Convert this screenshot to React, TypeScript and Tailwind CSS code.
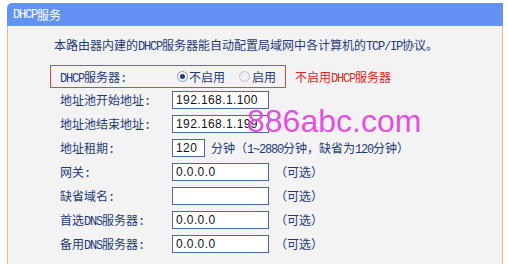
import React from "react";

const CJK = '"Noto Sans CJK SC", "Noto Sans", sans-serif';

function T({ s }: { s: string }) {
  const parts = s.split(/([\x20-\x7e]+)/).filter((p) => p.length > 0);
  return (
    <>
      {parts.map((p, i) =>
        /^[\x20-\x7e]+$/.test(p) ? (
          <span key={i} className="text-[12px] tracking-[-1.2px] font-['Liberation_Mono',monospace]">
            {p}
          </span>
        ) : (
          <span key={i}>{p}</span>
        )
      )}
    </>
  );
}

function Input({ value, w = "w-[97px]" }: { value: string; w?: string }) {
  return (
    <div
      className={`${w} h-[18px] shrink-0 border border-[#4f6a9c] bg-white pl-[3px] flex items-center text-[12px] tracking-[0.4px] text-[#111] font-['Liberation_Sans',sans-serif]`}
    >
      {value}
    </div>
  );
}

function Radio({ on }: { on: boolean }) {
  return on ? (
    <div className="w-[11px] h-[11px] rounded-full border border-[#8d9bb5] bg-[#f4f6fa] flex items-center justify-center">
      <div className="w-[5px] h-[5px] rounded-full bg-[#1f3d7a]" />
    </div>
  ) : (
    <div className="w-[11px] h-[11px] rounded-full border border-[#b9c1cd] bg-[#eef0f3]" />
  );
}

function Row({ label, children }: { label: string; children: React.ReactNode }) {
  return (
    <div className="flex items-center h-[18px] ml-[52px]">
      <div className="w-[112px] shrink-0 h-[16px] leading-[16px]">
        <T s={label} />
      </div>
      {children}
    </div>
  );
}

const Opt = () => <span className="ml-[6px]">（可选）</span>;

export default function App() {
  return (
    <div
      className="w-[508px] h-[264px] bg-white pt-[3px] pl-[7px] overflow-hidden relative text-[12px] leading-[16px] text-[#1f3b78]"
      style={{ fontFamily: CJK }}
    >
      <div className="w-[496px] h-[261px] flex flex-col">
        <div className="h-[23px] bg-[#6192f4] rounded-tl-[5px] pl-[6px] flex items-center text-white">
          <T s="DHCP服务" />
        </div>
        <div className="flex-1 bg-[#f3f3f3] border-l border-r border-[#f1b77c] flex flex-col">
          <div className="mt-[11px] ml-[46px] h-[16px] whitespace-nowrap">
            <T s="本路由器内建的DHCP服务器能自动配置局域网中各计算机的TCP/IP协议。" />
          </div>
          <div className="mt-[12px] h-[23px] flex items-center">
            <div className="ml-[42px] w-[236px] h-[23px] border border-[#d64848] flex items-center pl-[9px]">
              <div className="w-[117px] shrink-0 h-[16px]">
                <T s="DHCP服务器:" />
              </div>
              <Radio on />
              <span className="ml-[1px]">不启用</span>
              <div className="ml-[14px]">
                <Radio on={false} />
              </div>
              <span className="ml-[2px]">启用</span>
            </div>
            <div className="ml-[9px] h-[16px] text-[#e02424]">
              <T s="不启用DHCP服务器" />
            </div>
          </div>
          <div className="mt-[3px] flex flex-col gap-[6px]">
            <Row label="地址池开始地址:">
              <Input value="192.168.1.100" />
            </Row>
            <Row label="地址池结束地址:">
              <Input value="192.168.1.199" />
            </Row>
            <Row label="地址租期:">
              <Input value="120" w="w-[33px]" />
              <span className="ml-[6px] h-[16px] whitespace-nowrap">
                <T s="分钟（1~2880分钟，缺省为120分钟）" />
              </span>
            </Row>
            <Row label="网关:">
              <Input value="0.0.0.0" />
              <Opt />
            </Row>
            <Row label="缺省域名:">
              <Input value="" />
              <Opt />
            </Row>
            <Row label="首选DNS服务器:">
              <Input value="0.0.0.0" />
              <Opt />
            </Row>
            <Row label="备用DNS服务器:">
              <Input value="0.0.0.0" />
              <Opt />
            </Row>
          </div>
        </div>
      </div>
      <div className="absolute left-[247px] top-[105px] text-[32px] leading-[32px] text-[#e34fe0] font-['Liberation_Sans',sans-serif]">
        886abc.com
      </div>
    </div>
  );
}
